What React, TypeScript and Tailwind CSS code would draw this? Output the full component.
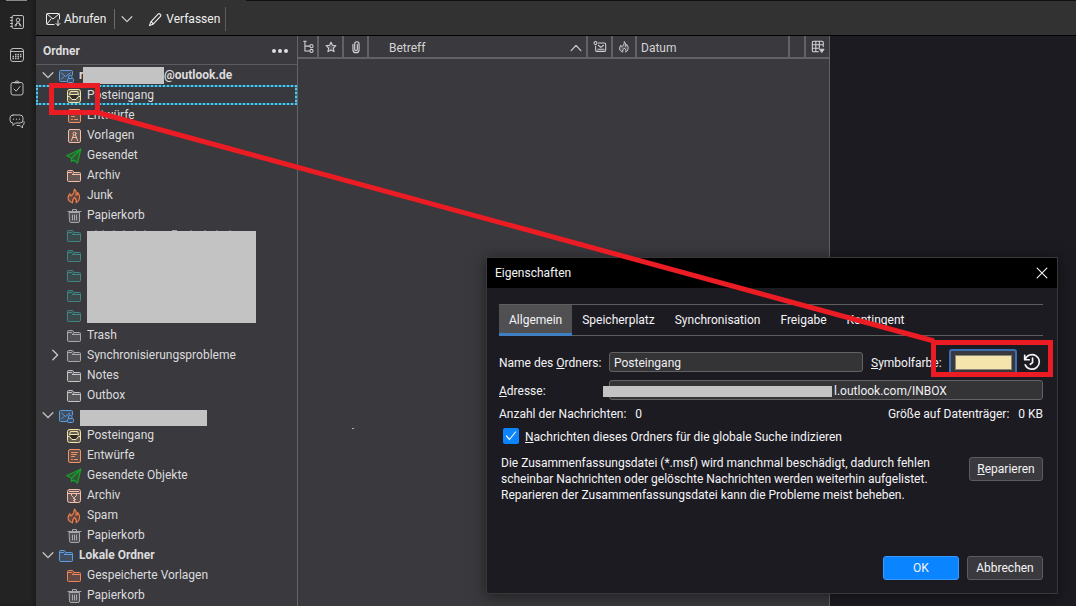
import type { ReactNode } from "react";

type IconProps = { className?: string; size?: number; children: ReactNode };

function Icon({ className = "", size = 16, children }: IconProps) {
  return (
    <svg
      viewBox="0 0 16 16"
      width={size}
      height={size}
      fill="none"
      stroke="currentColor"
      strokeLinecap="round"
      strokeLinejoin="round"
      aria-hidden="true"
      className={`shrink-0 ${className}`}
    >
      {children}
    </svg>
  );
}

const tint = { fill: "currentColor", fillOpacity: 0.22 };

const Chevron = ({ dir }: { dir: "down" | "right" | "up" }) => (
  <Icon size={14} className="text-[#c8c8ca]">
    <path
      strokeWidth="1.5"
      d={dir === "down" ? "M2.5 5.5 8 11l5.5-5.5" : dir === "up" ? "M2.5 11 8 5l5.5 6" : "M5.5 2.5 11 8l-5.5 5.5"}
    />
  </Icon>
);

const Folder = ({ color }: { color: string }) => (
  <Icon className={color}>
    <path {...tint} d="M1.5 3.5a1 1 0 0 1 1-1h4l1.500 2h5.500a1 1 0 0 1 1 1v7a1 1 0 0 1-1 1h-11a1 1 0 0 1-1-1z" />
    <path d="M1.5 4.5h4M8 4.5l-1.500 2M6.5 6.5h8" />
  </Icon>
);

const Inbox = () => (
  <Icon className="text-[#f4e3a6]">
    <rect {...tint} x="1.5" y="1.5" width="13" height="13" rx="2" />
    <path fill="#2e2c28" stroke="none" d="M4.500 7h7v1.500l-2 3h-3l-2-3z" />
    <path d="M1.5 8.5h2l2.500 3h4l2.500-3h2M3.500 6.500l1-3h7l1 3M4.500 6.500h7" />
  </Icon>
);

const Draft = () => (
  <Icon className="text-[#f0936a]">
    <rect {...tint} x="2.5" y="1.5" width="12" height="13" rx="1.5" />
    <path d="M5.5 4.5h6M5.5 6.5h5M5.5 8.5h3M5.5 11.5h1M8.5 11.5h3" />
  </Icon>
);

const Template = () => (
  <Icon className="text-[#f4bda4]">
    <rect {...tint} x="2.5" y="1.5" width="12" height="13" rx="1.5" />
    <circle cx="8.500" cy="5.500" r="1.500" />
    <path d="M7.5 7l-2 5.500M9.500 7l2 5.500M6.500 9.500h4" />
  </Icon>
);

const Sent = () => (
  <Icon className="text-[#17a22b]">
    <path
      fill="currentColor"
      fillOpacity="0.3"
      strokeWidth="1.2"
      d="M14.800 1.200.8 7.500l4.700 2.700v3.300l2.200-1.500 3.800 3z"
    />
    <path strokeWidth="1.2" d="M14.800 1.200 5.500 10.200" />
  </Icon>
);

const Flame = ({ color, size = 16 }: { color: string; size?: number }) => (
  <Icon className={color} size={size}>
    <path
      {...tint}
      strokeWidth="1.2"
      d="M8.500 1.200c2 1.800 2 4 1.500 6 1-.2 1.700-1.200 1.700-2.700 3 3.500 2.300 8.500-1.500 10.300.8-2 .3-3.300-1.700-5.300-2 2-2.500 3.300-2 5.300C1.500 13.500.8 9 4 5.500c0 1.500.3 2.300 1 2.500 1.800-1.500 3.300-3.500 3.500-6.800z"
    />
  </Icon>
);

const Trash = () => (
  <Icon className="text-[#a9a9ab]">
    <path {...tint} d="M3.5 4.5h10v8.500a1.500 1.500 0 0 1-1.500 1.500H5A1.500 1.500 0 0 1 3.500 13z" />
    <path d="M2 3.500h13M6.500 3V1.500h4V3M6.500 7v5M8.500 7v5M10.500 7v5" />
  </Icon>
);

const Archive = () => (
  <Icon className="text-[#f4c0ac]">
    <rect {...tint} x="1.5" y="1.5" width="13" height="13" rx="2" />
    <path d="M3.500 3.500h9M1.500 5.500h13M5.500 5.500v2l2 2h1l2-2v-2M7.500 10.500h1M8.500 11.500h1M7.500 12.500h1M8.500 13.500h.5" />
  </Icon>
);

const Account = () => (
  <Icon className="text-[#5a9de0]">
    <path {...tint} d="M8.500 13.500h-6a1 1 0 0 1-1-1v-9a1 1 0 0 1 1-1h11a1 1 0 0 1 1 1V7" />
    <path d="M3.500 5l4 3.500L12 5M3.500 11l2.500-2.500M10.500 10.500V9a1.700 1.700 0 0 1 3.500 0v1.500" />
    <rect {...tint} x="9.5" y="10.5" width="6" height="4" rx="1" />
  </Icon>
);

type Row = { label: string; icon: ReactNode; selected?: boolean; expandable?: boolean };

const hidden = (n: number): Row[] =>
  Array.from({ length: n }, () => ({ label: "", icon: <Folder color="text-[#3d8583]" /> }));

const outlook: Row[] = [
  { label: "Posteingang", icon: <Inbox />, selected: true },
  { label: "Entwürfe", icon: <Draft /> },
  { label: "Vorlagen", icon: <Template /> },
  { label: "Gesendet", icon: <Sent /> },
  { label: "Archiv", icon: <Folder color="text-[#f4bda4]" /> },
  { label: "Junk", icon: <Flame color="text-[#e8794a]" /> },
  { label: "Papierkorb", icon: <Trash /> },
];

const outlookMore: Row[] = [
  { label: "Trash", icon: <Folder color="text-[#a9a9ab]" /> },
  { label: "Synchronisierungsprobleme", icon: <Folder color="text-[#a9a9ab]" />, expandable: true },
  { label: "Notes", icon: <Folder color="text-[#c4c4c6]" /> },
  { label: "Outbox", icon: <Folder color="text-[#c4c4c6]" /> },
];

const second: Row[] = [
  { label: "Posteingang", icon: <Inbox /> },
  { label: "Entwürfe", icon: <Draft /> },
  { label: "Gesendete Objekte", icon: <Sent /> },
  { label: "Archiv", icon: <Archive /> },
  { label: "Spam", icon: <Flame color="text-[#e8794a]" /> },
  { label: "Papierkorb", icon: <Trash /> },
];

const local: Row[] = [
  { label: "Gespeicherte Vorlagen", icon: <Folder color="text-[#f0835a]" /> },
  { label: "Papierkorb", icon: <Trash /> },
];

function FolderRow({ label, icon, selected, expandable }: Row) {
  return (
    <li className={selected ? "flex h-5 bg-[#1f7590]" : "flex h-5"}>
      <div
        className={
          selected
            ? "flex flex-1 items-center border-2 border-dotted border-[#58c4e8] bg-[#38393e] bg-clip-padding pl-2.5"
            : "flex flex-1 items-center pl-3"
        }
      >
        <span className="flex w-[18px] justify-center pr-1">{expandable && <Chevron dir="right" />}</span>
        <span className="flex pt-0.5">{icon}</span>
        <span className="pl-[5px]">{label}</span>
      </div>
    </li>
  );
}

function AccountRow({ icon, children }: { icon: ReactNode; children: ReactNode }) {
  return (
    <div className="flex h-5 items-center pl-[5px] font-bold">
      <Chevron dir="down" />
      <span className="flex pt-0.5 pr-[5px] pl-[3px]">{icon}</span>
      {children}
    </div>
  );
}

function Rail() {
  const cls = "flex h-[33px] w-full items-center justify-center text-[#bdbdbf]";
  return (
    <nav className="flex w-9 shrink-0 flex-col bg-[#232323] pr-[3px] shadow-[inset_-3px_0_3px_#1c1c1c]">
      <div className="mx-[6px] h-px bg-[#8a8a8a]" />
      <div className="h-1" />
      <button className={cls} aria-label="Adressbuch">
        <Icon>
          <rect x="3" y="1.5" width="11.5" height="13" rx="1.5" />
          <circle cx="9" cy="6" r="1.8" />
          <path d="M6 12c0-4 6-4 6 0M8 8.500 7 12M10 8.500 11 12M1.500 3.500h2M1.500 6.500h2M1.500 9.500h2M1.500 12.500h2" />
        </Icon>
      </button>
      <button className={cls} aria-label="Kalender">
        <Icon>
          <rect x="1.5" y="1.5" width="13" height="13" rx="2.5" />
          <path d="M1.500 4.500h13" />
          <path
            strokeLinecap="butt"
            strokeWidth="1.3"
            strokeDasharray="1.5 1"
            d="M6 7.500h7.500M3.500 9.500h9.500M3.500 11.500h7"
          />
        </Icon>
      </button>
      <button className={cls} aria-label="Aufgaben">
        <Icon>
          <rect x="2" y="2.5" width="12" height="12.5" rx="2" />
          <path d="M5.500 2.500c0-2 5-2 5 0zM5 9l2.200 2.200L11 6.500" />
        </Icon>
      </button>
      <button className={cls} aria-label="Chat">
        <Icon>
          <path d="M4 2h7a3 3 0 0 1 3 3v2a3 3 0 0 1-3 3H6.500L4 12.500V10a3 3 0 0 1-3-3V5a3 3 0 0 1 3-3zM8 12.500h3l2.500 2.500v-2.500c1.500-.5 1.800-2 1.500-4" />
          <path strokeWidth="1.3" d="M4.500 6.200h.01M7.500 6.200h.01M10.500 6.200h.01" />
        </Icon>
      </button>
    </nav>
  );
}

function Toolbar() {
  return (
    <header className="flex flex-col border-b border-black bg-[#323233] text-[#f0f0f0]">
      <div className="ml-[210px] h-px bg-[#111112]" />
      <div className="flex h-[34px] items-center pt-0.5 pl-[9px]">
        <button className="flex items-center gap-[3px]">
          <Icon>
            <path d="M9 13.500H2.500a1 1 0 0 1-1-1v-9a1 1 0 0 1 1-1h11a1 1 0 0 1 1 1V8M2 3l6 5 6-5M2 13l4-5M13 9v5.500M11 12.500l2 2 2-2" />
          </Icon>
          Abrufen
        </button>
        <span className="ml-2 h-5 w-px bg-[#6a6a6c]" />
        <button className="flex w-6 justify-center" aria-label="Abrufoptionen">
          <Chevron dir="down" />
        </button>
        <button className="flex items-center gap-[3px] pl-[9px]">
          <Icon size={15}>
            <path strokeWidth="1.2" d="M1.500 14.500 3 10.500 11 2c1-1 3.500 1.200 2.500 2.500L5.500 13zM3 10.500c1.500.3 2.200 1 2.500 2.500" />
          </Icon>
          Verfassen
        </button>
        <span className="ml-[5px] h-6 w-px bg-[#5c5c5e]" />
      </div>
    </header>
  );
}

function FolderPane() {
  return (
    <aside className="w-[262px] shrink-0 border-r border-[#646466] bg-[#3a393d] text-[#dcdcde]">
      <div className="flex h-[29px] items-center justify-between border-b border-[#5c5c5f] pt-px pr-2 pl-[7px]">
        <h2 className="font-bold">Ordner</h2>
        <button aria-label="Ordneroptionen">
          <svg width="18" height="6" viewBox="0 0 18 6" fill="#dcdcde" aria-hidden="true">
            <circle cx="3" cy="3" r="2" />
            <circle cx="9" cy="3" r="2" />
            <circle cx="15" cy="3" r="2" />
          </svg>
        </button>
      </div>
      <AccountRow icon={<Account />}>
        <span className="w-1 overflow-hidden">r</span>
        <span className="h-[17px] w-[81px] bg-[#c3c3c3]" />
        @outlook.de
      </AccountRow>
      <ul>
        {outlook.map((r) => (
          <FolderRow key={r.label} {...r} />
        ))}
      </ul>
      <div className="relative">
        <ul>
          {hidden(5).map((r, i) => (
            <FolderRow key={i} {...r} />
          ))}
        </ul>
        <svg className="absolute top-1 left-[51px]" width="160" height="3" stroke="#a0a0a2" aria-hidden="true">
          <path d="M8 2h2M16 1v2M26 2h2M37 1v2M48 1v2M58 1v2M85 1.500h5M103 2h2M118 1v2M130 1v2M143 1v2" />
        </svg>
        <div className="absolute top-1.5 left-[51px] h-[92px] w-[169px] bg-[#c3c3c3]" />
      </div>
      <ul>
        {outlookMore.map((r) => (
          <FolderRow key={r.label} {...r} />
        ))}
      </ul>
      <AccountRow icon={<Account />}>
        <span className="mt-1.5 ml-px h-4 w-[127px] bg-[#c3c3c3]" />
      </AccountRow>
      <ul>
        {second.map((r) => (
          <FolderRow key={r.label} {...r} />
        ))}
      </ul>
      <AccountRow icon={<Folder color="text-[#5a9de0]" />}>Lokale Ordner</AccountRow>
      <ul>
        {local.map((r) => (
          <FolderRow key={r.label} {...r} />
        ))}
      </ul>
    </aside>
  );
}

function MessageList() {
  const th = "h-[23px] border-r-2 border-b-2 border-[#626265] p-0 font-normal";
  return (
    <main className="w-[532px] shrink-0 border-r border-[#626265] bg-[#3a393d] text-[#d4d4d6]">
      <table className="w-full table-fixed border-separate border-spacing-0 text-left">
        <thead>
          <tr>
            <th className={`${th} w-[21px]`} aria-label="Thema">
              <Icon size={14} className="mx-auto">
                <path strokeWidth="1.2" d="M4.500 1.500v11h5.500M4.500 7H10M3 1.500h3" />
                <circle strokeWidth="1.2" cx="12" cy="7" r="1.8" />
                <circle strokeWidth="1.2" cx="12" cy="12.5" r="1.8" />
              </Icon>
            </th>
            <th className={`${th} w-[25px]`} aria-label="Markiert">
              <Icon size={12} className="mx-auto">
                <path
                  {...tint}
                  strokeWidth="1.4"
                  d="m8 1.500 2 4.200 4.600.6-3.400 3.200.9 4.700L8 12l-4.100 2.200.9-4.700L1.400 6.300l4.600-.6z"
                />
              </Icon>
            </th>
            <th className={`${th} w-[25px]`} aria-label="Anhänge">
              <Icon size={14} className="mx-auto">
                <path
                  strokeWidth="1.3"
                  d="M4.500 5v6a3.500 3.500 0 0 0 7 0V4.500a2.500 2.500 0 0 0-5 0v6a1.500 1.500 0 0 0 3 0V5"
                />
              </Icon>
            </th>
            <th className={th}>
              <div className="flex items-center justify-between pt-0.5 pr-[3px] pl-5">
                Betreff
                <Chevron dir="up" />
              </div>
            </th>
            <th className={`${th} w-[25px]`} aria-label="Gelesen">
              <Icon size={14} className="mx-auto">
                <path
                  strokeWidth="1.2"
                  d="M6 3.500h7A1.500 1.500 0 0 1 14.500 5v6.500A1.500 1.500 0 0 1 13 13H4.500A1.500 1.500 0 0 1 3 11.500V7M6 6l3 2.500L12 6M5.500 10.500h7"
                />
                <circle strokeWidth="1.2" cx="2.8" cy="3.5" r="1.7" />
              </Icon>
            </th>
            <th className={`${th} w-[24px]`} aria-label="Junk-Status">
              <span className="flex justify-center">
                <Flame color="text-[#d4d4d6]" size={12} />
              </span>
            </th>
            <th className={`${th} w-[153px]`}>
              <div className="pt-0.5 pl-1">Datum</div>
            </th>
            <th className={`${th} w-[16px]`} />
            <th className="h-[23px] w-[23px] border-b-2 border-[#626265] p-0" aria-label="Spalten">
              <Icon size={14} className="mx-auto">
                <path
                  strokeWidth="1.2"
                  d="M8.500 13.500H3A1.500 1.500 0 0 1 1.500 12V3A1.500 1.500 0 0 1 3 1.500h9.500A1.500 1.500 0 0 1 14 3v4.500M1.500 5.500H14M5.500 1.500v12M9.500 1.500v8M1.500 9.500h7"
                />
                <path fill="currentColor" d="M10 10.500h5L12.500 14z" />
              </Icon>
            </th>
          </tr>
        </thead>
      </table>
    </main>
  );
}

const field = "h-5 rounded-[3px] border border-[#626265] bg-[#343437] px-1 pt-0.5 text-[#f0f0f2]";
const button = "h-6 rounded-[3px] border border-[#5c5c60] bg-[#3a3a3e] text-[#f4f4f6]";
const tab = "px-2.5";

function PropertiesDialog() {
  return (
    <section
      role="dialog"
      aria-label="Eigenschaften"
      className="absolute top-[257px] left-[486px] flex h-[337px] w-[572px] flex-col border border-[#38383b] bg-[#1c1b22] text-[#f4f4f6] shadow-[0_2px_14px_rgba(0,0,0,0.5)]"
    >
      <div className="flex h-[30px] shrink-0 items-center justify-between bg-black pr-[9px] pl-2">
        <h1>Eigenschaften</h1>
        <button aria-label="Schließen">
          <Icon size={12}>
            <path strokeWidth="1.5" d="M1.500 1.500l13 13M14.500 1.500l-13 13" />
          </Icon>
        </button>
      </div>
      <div className="flex flex-1 flex-col pt-4 pr-3.5 pb-[13px] pl-3">
        <div role="tablist" className="flex h-8 border-y border-[#5e5e61]">
          <button
            role="tab"
            aria-selected="true"
            className="bg-[#505052] px-2.5 shadow-[inset_0_-2px_0_#3d7fc0,0_1px_0_#3d7fc0]"
          >
            Allgemein
          </button>
          <button role="tab" className={tab}>Speicherplatz</button>
          <button role="tab" className={tab}>Synchronisation</button>
          <button role="tab" className={tab}>Freigabe</button>
          <button role="tab" className={tab}>Kontingent</button>
        </div>

        <div className="mt-[11px] flex h-[30px] items-center">
          <label htmlFor="name" className="w-[110px] shrink-0 pt-0.5">
            Name des <u>O</u>rdners:
          </label>
          <input id="name" defaultValue="Posteingang" className={`${field} w-[254px]`} />
          <label htmlFor="color" className="ml-2 w-[78px] shrink-0 pt-0.5">
            <u>S</u>ymbolfarbe:
          </label>
          <button
            id="color"
            className="flex h-[27px] w-[68px] items-center justify-center rounded-[3px] border-2 border-[#3a6fb4] bg-[#38383d]"
          >
            <span className="h-[15px] w-[57px] border border-[#8a8678] bg-[#f5e4ab]" />
          </button>
          <button className="ml-1.5" aria-label="Standardfarbe wiederherstellen">
            <Icon size={18}>
              <path strokeWidth="1.5" d="M1.500 2v4h4M1.800 5.800a6.500 6.500 0 1 1 .2 4.700M8.500 4.500v4L6.500 10" />
            </Icon>
          </button>
        </div>

        <div className="mt-[3px] flex items-center">
          <label htmlFor="address" className="w-[110px] shrink-0 pt-0.5">
            <u>A</u>dresse:
          </label>
          <div className="relative flex flex-1">
            <input id="address" readOnly defaultValue="l.outlook.com/INBOX" className={`${field} w-full pl-[224px]`} />
            <span className="absolute top-1.5 -left-1.5 h-[11px] w-[229px] bg-[#c3c3c3]" />
          </div>
        </div>

        <div className="mt-1.5 flex h-4 items-center justify-between">
          <p>
            Anzahl der Nachrichten: <span className="pl-1.5">0</span>
          </p>
          <p>
            Größe auf Datenträger: <span className="pl-1.5">0 KB</span>
          </p>
        </div>

        <div className="mt-1.5 ml-1 flex h-4 items-center gap-1.5">
          <span className="grid">
            <input
              id="index"
              type="checkbox"
              defaultChecked
              className="col-start-1 row-start-1 size-4 appearance-none rounded-[2px] bg-[#0a84ff]"
            />
            <Icon className="pointer-events-none col-start-1 row-start-1">
              <path strokeWidth="1.2" d="m3.500 8 3 3.500 6-7.500" />
            </Icon>
          </span>
          <label htmlFor="index" className="pt-0.5">
            <u>N</u>achrichten dieses Ordners für die globale Suche indizieren
          </label>
        </div>

        <div className="mt-[11px] flex items-start justify-between">
          <p className="pl-0.5 whitespace-nowrap">
            Die Zusammenfassungsdatei (*.msf) wird manchmal beschädigt, dadurch fehlen
            <br />
            scheinbar Nachrichten oder gelöschte Nachrichten werden weiterhin aufgelistet.
            <br />
            Reparieren der Zusammenfassungsdatei kann die Probleme meist beheben.
          </p>
          <button className={`${button} mt-0.5 w-[74px] shrink-0`}>
            <u>R</u>eparieren
          </button>
        </div>

        <div className="mt-auto flex justify-end gap-2">
          <button className="h-6 w-[76px] rounded-[3px] border border-[#3a9bff] bg-[#0a84ff]">OK</button>
          <button className={`${button} w-[76px]`}>Abbrechen</button>
        </div>
      </div>
    </section>
  );
}

function Annotations() {
  return (
    <svg
      className="pointer-events-none absolute top-0 left-0"
      width="1076"
      height="606"
      fill="none"
      stroke="#ec1c24"
      strokeWidth="5"
      aria-hidden="true"
    >
      <rect x="51.5" y="85.5" width="46" height="27" />
      <rect x="933.5" y="342.5" width="117" height="32" />
      <path d="M99 113 934 341" />
      <rect x="352" y="428" width="2" height="1" fill="#b0b0b2" stroke="none" />
    </svg>
  );
}

export default function App() {
  return (
    <div className="relative flex min-h-screen overflow-hidden bg-[#1c1b22] font-[Roboto,'Open_Sans',sans-serif] text-[12px] leading-4">
      <Rail />
      <div className="flex min-w-0 flex-1 flex-col">
        <Toolbar />
        <div className="flex flex-1">
          <FolderPane />
          <MessageList />
        </div>
      </div>
      <PropertiesDialog />
      <Annotations />
    </div>
  );
}
